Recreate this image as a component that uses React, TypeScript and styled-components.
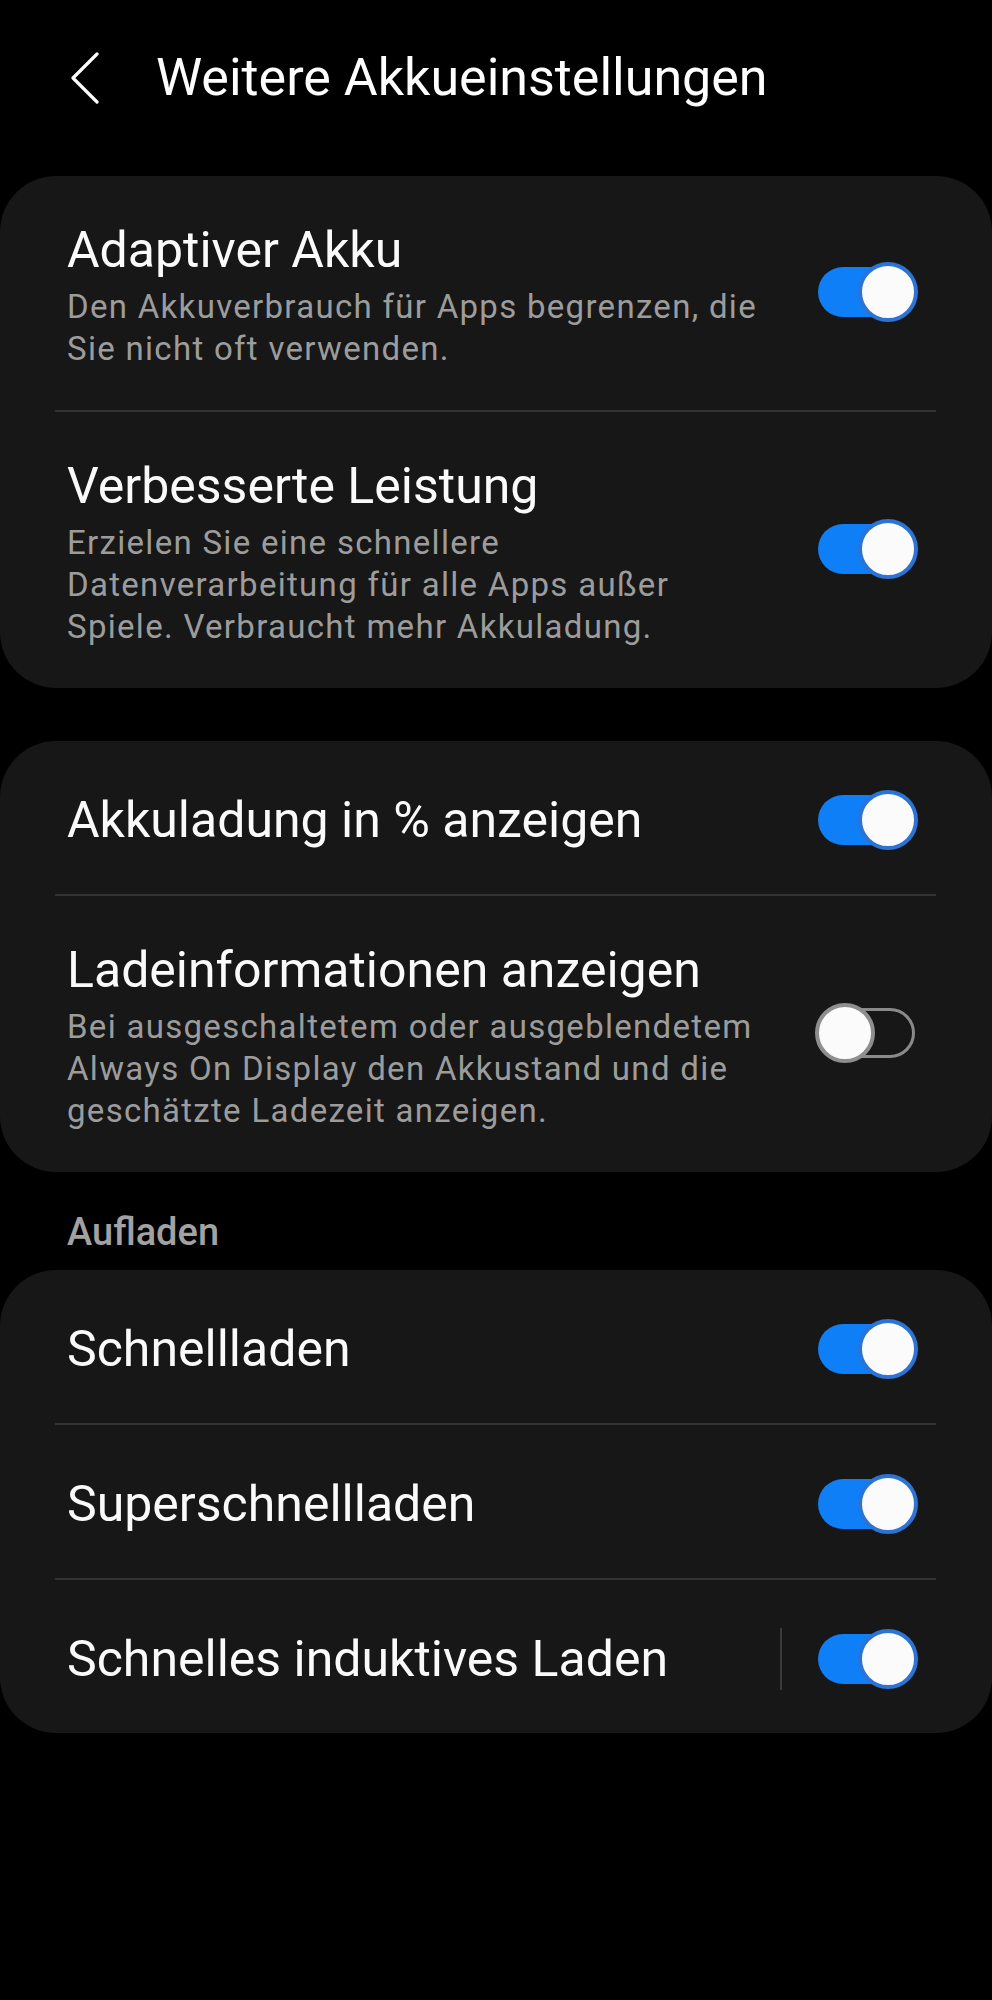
import { Fragment } from "react";
import styled, { createGlobalStyle } from "styled-components";

type Setting = {
  id: string;
  title: string;
  description?: string;
  on: boolean;
  separator?: boolean;
};

type Section = {
  id: string;
  label?: string;
  items: Setting[];
};

const sections: Section[] = [
  {
    id: "akku",
    items: [
      {
        id: "adaptive",
        title: "Adaptiver Akku",
        description:
          "Den Akkuverbrauch für Apps begrenzen, die Sie nicht oft verwenden.",
        on: true,
      },
      {
        id: "performance",
        title: "Verbesserte Leistung",
        description:
          "Erzielen Sie eine schnellere Datenverarbeitung für alle Apps außer Spiele. Verbraucht mehr Akkuladung.",
        on: true,
      },
    ],
  },
  {
    id: "anzeige",
    items: [
      { id: "percent", title: "Akkuladung in % anzeigen", on: true },
      {
        id: "chargeinfo",
        title: "Ladeinformationen anzeigen",
        description:
          "Bei ausgeschaltetem oder ausgeblendetem Always On Display den Akkustand und die geschätzte Ladezeit anzeigen.",
        on: false,
      },
    ],
  },
  {
    id: "laden",
    label: "Aufladen",
    items: [
      { id: "fast", title: "Schnellladen", on: true },
      { id: "superfast", title: "Superschnellladen", on: true },
      {
        id: "wireless",
        title: "Schnelles induktives Laden",
        on: true,
        separator: true,
      },
    ],
  },
];

const GlobalStyle = createGlobalStyle`
  html, body {
    margin: 0;
    padding: 0;
    background: #000;
  }
  body {
    font-family: Roboto, "Noto Sans", "Liberation Sans", sans-serif;
    -webkit-font-smoothing: antialiased;
  }
  * {
    box-sizing: border-box;
  }
`;

const Screen = styled.div`
  width: 992px;
  min-height: 2000px;
  background: #000;
  color: #fafafa;
`;

const Header = styled.header`
  height: 156px;
  display: flex;
  align-items: center;
  padding-left: 70px;
  gap: 56px;
`;

const BackButton = styled.button`
  width: 30px;
  height: 52px;
  padding: 0;
  border: 0;
  background: none;
  display: flex;
  cursor: pointer;
`;

const HeaderTitle = styled.h1`
  margin: 0;
  font-size: 52px;
  font-weight: 400;
  line-height: 60px;
  color: #fff;
`;

const Content = styled.main`
  padding-top: 20px;
  display: flex;
  flex-direction: column;
`;

const Card = styled.section<{ $spaced: boolean }>`
  background: #171717;
  border-radius: 56px;
  overflow: hidden;
  margin-top: ${(p) => (p.$spaced ? "53px" : "0")};
`;

const SectionLabel = styled.div`
  padding: 35px 67px 13px;
  font-size: 38px;
  font-weight: 500;
  line-height: 50px;
  color: #a2a2a2;
`;

const Row = styled.div<{ $multi: boolean }>`
  display: flex;
  align-items: center;
  gap: 42px;
  min-height: 153px;
  padding: ${(p) => (p.$multi ? "38px 75px 40px 67px" : "40px 75px 36px 67px")};
`;

const RowText = styled.div`
  flex: 1;
  min-width: 0;
`;

const RowTitle = styled.div`
  font-size: 50px;
  line-height: 72px;
  color: #fafafa;
`;

const RowSub = styled.div`
  font-size: 33px;
  line-height: 42px;
  letter-spacing: 1.3px;
  color: #9c9c9c;
`;

const Divider = styled.div`
  height: 2px;
  background: #333;
  margin: 0 56px 0 55px;
`;

const Controls = styled.div`
  display: flex;
  align-items: center;
  gap: 33px;
  flex-shrink: 0;
`;

const VSeparator = styled.span`
  width: 2px;
  height: 62px;
  background: #3a3a3a;
`;

const Switch = styled.div`
  position: relative;
  width: 102px;
  height: 60px;
  flex-shrink: 0;
`;

const Track = styled.span<{ $on: boolean }>`
  position: absolute;
  left: 3px;
  right: 2px;
  top: 5px;
  bottom: 5px;
  border-radius: 25px;
  background: ${(p) => (p.$on ? "#0e7ff7" : "transparent")};
  border: ${(p) => (p.$on ? "none" : "3px solid #8a8a8a")};
`;

const Thumb = styled.span<{ $on: boolean }>`
  position: absolute;
  top: 0;
  left: ${(p) => (p.$on ? "43px" : "0")};
  width: 60px;
  height: 60px;
  border-radius: 50%;
  background: #fbfbfb;
  border: ${(p) => (p.$on ? "4px solid #2b74d6" : "4px solid #8e8e8e")};
`;

const Toggle = ({ on }: { on: boolean }) => (
  <Switch role="switch" aria-checked={on}>
    <Track $on={on} />
    <Thumb $on={on} />
  </Switch>
);

const BackIcon = () => (
  <svg width="30" height="52" viewBox="0 0 30 52" fill="none">
    <path
      d="M27 2 L3 26 L27 50"
      stroke="#fff"
      strokeWidth="3.2"
      strokeLinecap="round"
      strokeLinejoin="round"
    />
  </svg>
);

const App = () => {
  return (
    <>
      <GlobalStyle />
      <Screen>
        <Header>
          <BackButton aria-label="Zurück">
            <BackIcon />
          </BackButton>
          <HeaderTitle>Weitere Akkueinstellungen</HeaderTitle>
        </Header>
        <Content>
          {sections.map((section, si) => (
            <Fragment key={section.id}>
              {section.label && <SectionLabel>{section.label}</SectionLabel>}
              <Card $spaced={si > 0 && !section.label}>
                {section.items.map((item, i) => (
                  <Fragment key={item.id}>
                    {i > 0 && <Divider />}
                    <Row $multi={!!item.description}>
                      <RowText>
                        <RowTitle>{item.title}</RowTitle>
                        {item.description && (
                          <RowSub>{item.description}</RowSub>
                        )}
                      </RowText>
                      <Controls>
                        {item.separator && <VSeparator />}
                        <Toggle on={item.on} />
                      </Controls>
                    </Row>
                  </Fragment>
                ))}
              </Card>
            </Fragment>
          ))}
        </Content>
      </Screen>
    </>
  );
};

export default App;
